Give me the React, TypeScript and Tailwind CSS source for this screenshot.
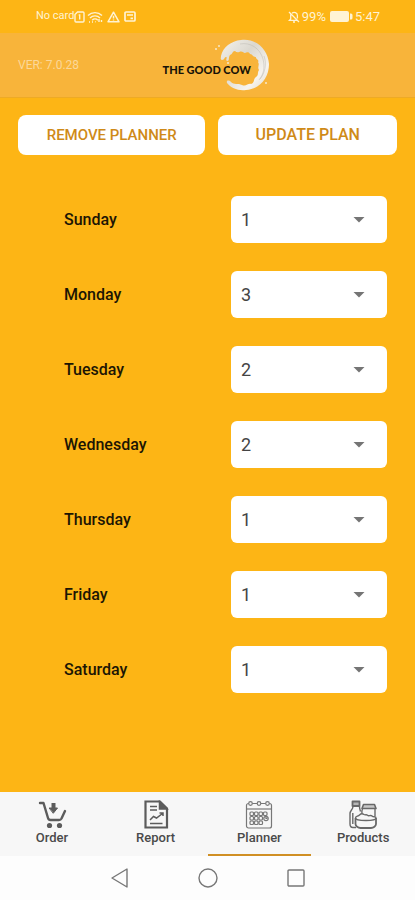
import { useState } from "react";
import type { ReactNode } from "react";

const days = [
  { name: "Sunday", amount: "1" },
  { name: "Monday", amount: "3" },
  { name: "Tuesday", amount: "2" },
  { name: "Wednesday", amount: "2" },
  { name: "Thursday", amount: "1" },
  { name: "Friday", amount: "1" },
  { name: "Saturday", amount: "1" },
];

const StatusBar = () => {
  return (
    <div className="flex h-[33px] items-center justify-between pr-[35px] pl-9 text-[#fff3d3]">
      <div className="flex items-center">
        <span className="text-[11px]">No card</span>
        <svg width="11" height="12" viewBox="0 0 11 12" fill="none" stroke="currentColor" strokeWidth="1.4" aria-hidden="true">
          <path d="M3.5 1H9a1 1 0 0 1 1 1v8a1 1 0 0 1-1 1H2a1 1 0 0 1-1-1V3.5z" />
          <path d="M4.7 4h1v4.5" />
        </svg>
        <svg className="ml-0.5" width="16" height="12" viewBox="0 0 16 12" fill="none" stroke="currentColor" strokeWidth="1.4" aria-hidden="true">
          <path d="M1 4.5a10 10 0 0 1 14 0M3 7a7 7 0 0 1 10 0M5.2 9.2a4 4 0 0 1 5.6 0" />
          <path d="M2 11h1M5 11h1M8 10.8h.6M12 8v3M14.5 9v2" />
        </svg>
        <svg className="ml-1" width="13" height="12" viewBox="0 0 13 12" fill="none" stroke="currentColor" strokeWidth="1.5" strokeLinejoin="round" aria-hidden="true">
          <path d="M6.5 1.2 12 10.8H1zM6.5 4.8v2.7M6.5 8.5v1" />
        </svg>
        <svg className="ml-1" width="12" height="11" viewBox="0 0 12 11" fill="none" stroke="currentColor" strokeWidth="1.7" aria-hidden="true">
          <rect x="1" y="1" width="10" height="9" rx="1" />
          <path d="M3 4h6M6.5 7.3H9" />
        </svg>
      </div>
      <div className="flex items-center text-[13px]">
        <svg width="12" height="12" viewBox="0 0 12 12" fill="none" stroke="currentColor" strokeWidth="1.3" aria-hidden="true">
          <path d="M1 1l10 10M2.7 3.5V8L1.4 9.4h7.8M4 2.2c2-1.6 5.4-.6 5.4 2.3v3M5 11h2" />
        </svg>
        <span className="ml-0.5">99%</span>
        <svg className="ml-1" width="23" height="11" viewBox="0 0 23 11" fill="currentColor" aria-hidden="true">
          <rect width="19" height="11" rx="2" />
          <path d="M20 2.5h1A1.5 1.5 0 0 1 22.5 4v3A1.5 1.5 0 0 1 21 8.5h-1z" />
        </svg>
        <span className="ml-0.5">5:47</span>
      </div>
    </div>
  );
};

const Logo = () => {
  return (
    <div className="relative flex h-[52px] w-[108px] items-center">
      <svg className="absolute top-0 right-0" width="58" height="52" viewBox="0 0 58 52" aria-hidden="true">
        <defs>
          <linearGradient id="milk" x1="0" y1="0" x2="1" y2="1">
            <stop offset="0" stopColor="#f6f3ec" />
            <stop offset="0.4" stopColor="#dbd8d0" />
            <stop offset="0.75" stopColor="#f7f4ee" />
            <stop offset="1" stopColor="#e2d9c6" />
          </linearGradient>
        </defs>
        <path
          fill="url(#milk)"
          d="M8 17C10 8 18 2 28 1C43-1 55 10 56 25C56 39 47 50 33 51C25 52 18 49 14 44C13 41 16 41 18 43C21 46 25 44 29 46C33 48 35 44 38 45C42 44 40 40 43 38C46 36 44 34 46 31C44 28 47 26 45 23C47 21 42 20 43 18C39 18 40 15 37 15C34 11 33 16 30 13C27 11 25 15 22 12C19 12 20 15 17 16C15 19 17 22 14 22C12 21 15 18 13 18C11 18 12 21 9 21C7 20 8 19 8 17Z"
        />
        <path fill="none" stroke="#bdbab3" strokeWidth="1" opacity=".5" d="M27 5c10-2 20 4 23 15 2 8 1 15-4 21M51 17c3 8 1 17-4 23" />
        <g fill="#f6e8cd">
          <circle cx="3" cy="10" r="1" />
          <circle cx="6" cy="7" r="1" />
          <circle cx="15" cy="24" r="1" />
          <circle cx="53" cy="44" r="1" />
        </g>
      </svg>
      <span className="relative mt-2.5 font-['Lato'] text-[11px] font-black whitespace-nowrap text-[#171308]">
        THE GOOD COW
      </span>
    </div>
  );
};

const DayRow = ({ name, amount }: { name: string; amount: string }) => {
  const [value, setValue] = useState(amount);

  return (
    <div className="flex items-center justify-between">
      <label htmlFor={name} className="text-base font-medium text-[#1c1504]">
        {name}
      </label>
      <div className="relative w-[156px]">
        <select
          id={name}
          value={value}
          onChange={(e) => setValue(e.target.value)}
          className="h-[47px] w-full appearance-none rounded-md bg-white px-2.5 text-lg text-[#444444]"
        >
          {["0", "1", "2", "3", "4", "5"].map((n) => (
            <option key={n} value={n}>
              {n}
            </option>
          ))}
        </select>
        <svg className="pointer-events-none absolute top-5 right-[22px]" width="12" height="7" viewBox="0 0 12 7" fill="#757575" aria-hidden="true">
          <path d="M.5 1h11L6 6.500z" />
        </svg>
      </div>
    </div>
  );
};

const CartIcon = () => (
  <svg width="30" height="30" viewBox="0 0 30 30" fill="none" stroke="#5c5c5c" strokeWidth="2.4" strokeLinecap="round" strokeLinejoin="round" aria-hidden="true">
    <path d="M3 3h3.500l4.500 15c.4 1.500 1 2 2.500 2H22c1.500 0 2-.5 2.500-1.500L28 11" />
    <path d="M16.500 3v6" strokeWidth="4" strokeLinecap="butt" />
    <path d="M12.500 8h8l-4 5z" fill="#5c5c5c" strokeWidth="1" />
    <circle cx="12.500" cy="25.500" r="2.600" fill="#5c5c5c" stroke="none" />
    <circle cx="22.500" cy="25.500" r="2.600" fill="#5c5c5c" stroke="none" />
  </svg>
);

const ReportIcon = () => (
  <svg width="30" height="30" viewBox="0 0 30 30" fill="none" stroke="#5c5c5c" strokeWidth="1.500" aria-hidden="true">
    <path d="M4.500 1.500H19l7 7v19H4.500z" strokeWidth="2.200" />
    <path d="M18.500 1.500V9H26z" fill="#5c5c5c" />
    <path d="M9 6.500h7M9 10h7M9 23.500h12.500" />
    <path d="m9 20 3.500-3.500 3 1.500 6-4.500M18.500 13H22v3" />
  </svg>
);

const CalendarIcon = () => (
  <svg width="30" height="30" viewBox="0 0 30 30" fill="none" stroke="#777777" strokeWidth="1.200" aria-hidden="true">
    <rect x="2.500" y="3.500" width="25" height="24.500" rx="2" />
    <path d="M2.500 9h25" />
    <g fill="#f7f7f7">
      <circle cx="6.500" cy="3.500" r="1.800" />
      <circle cx="15" cy="3.500" r="1.800" />
      <circle cx="23.500" cy="3.500" r="1.800" />
    </g>
    {[12, 16.5, 21].map((y) =>
      [6, 10.5, 15].map((x) => (
        <rect key={`${x}-${y}`} x={x} y={y} width="3.500" height="3.500" rx="1" />
      ))
    )}
    <rect x="19.500" y="12" width="3.500" height="3.500" rx="1" />
    <circle cx="22" cy="18.500" r="2.200" />
    <path d="M22 17v1.500h1.500" />
  </svg>
);

const GroceriesIcon = () => (
  <svg width="30" height="30" viewBox="0 0 30 30" fill="none" stroke="#686868" strokeWidth="1.400" strokeLinejoin="round" aria-hidden="true">
    <path d="M4.500 1.500h7V6h-7z" fill="#b5b5b5" strokeWidth="1.800" />
    <path d="M5 6.500c0 3-3 4-3 7V24c0 2 1 3.500 3 3.500h3M11.500 6.500c0 2 .5 3 1 5M4.800 13v11" />
    <path d="M15.500 4.500h11l1.500 4H14z" fill="#c8c8c8" strokeWidth="1.600" />
    <path d="M14.500 9c-1 2-1 3-.5 4.500M27 9v7" />
    <path d="M7.500 18c0-2 2.500-1.500 4-3s3-1.500 4.500-.5 2-.5 3.500.8 3-.8 4.500.7 4 0 4 2-4 2.500-10 2.500S7.500 20 7.500 18z" fill="#f7f7f7" />
    <path d="M7.500 18v6c0 2 2.500 4 5 4H23c2.500 0 5-2 5-4v-6" strokeWidth="1.800" />
  </svg>
);

const Tab = ({ label, icon, active }: { label: string; icon: ReactNode; active?: boolean }) => {
  return (
    <a
      href="#"
      aria-current={active ? "page" : undefined}
      className={
        active
          ? "flex h-16 flex-1 flex-col items-center border-b-2 border-[#d08f24] pt-2"
          : "flex h-16 flex-1 flex-col items-center border-b-2 border-transparent pt-2"
      }
    >
      {icon}
      <span className="text-[13px] leading-4 font-medium text-[#4a4a4a]">{label}</span>
    </a>
  );
};

export default function App() {
  return (
    <div className="flex min-h-screen flex-col bg-[#fdb515] font-['Roboto',sans-serif]">
      <StatusBar />
      <header className="flex h-[65px] items-center border-b border-[#eeaa25] bg-[#f8b43a] pl-[18px]">
        <span className="flex-1 text-xs text-[#fbd899]">VER: 7.0.28</span>
        <Logo />
        <div className="flex-1" />
      </header>

      <main className="flex-1 pt-[17px]">
        <div className="grid grid-cols-[188fr_179fr] gap-[13px] px-[18px] font-medium text-[#cf8a18]">
          <button type="button" className="h-10 rounded-lg bg-white text-[15px]">
            REMOVE PLANNER
          </button>
          <button type="button" className="h-10 rounded-lg bg-white text-base">
            UPDATE PLAN
          </button>
        </div>
        <div className="mt-[41px] flex flex-col gap-7 pr-7 pl-16">
          {days.map((day) => (
            <DayRow key={day.name} name={day.name} amount={day.amount} />
          ))}
        </div>
      </main>

      <nav className="flex bg-[#f7f7f7]">
        <Tab label="Order" icon={<CartIcon />} />
        <Tab label="Report" icon={<ReportIcon />} />
        <Tab label="Planner" icon={<CalendarIcon />} active />
        <Tab label="Products" icon={<GroceriesIcon />} />
      </nav>

      <div className="flex h-11 items-center justify-center gap-[68px] bg-[#fdfdfd]">
        <button type="button" aria-label="Back">
          <svg width="20" height="20" viewBox="0 0 20 20" fill="none" stroke="#777777" strokeWidth="1.4" strokeLinejoin="round">
            <path d="M17 1v18L2 10z" />
          </svg>
        </button>
        <button type="button" aria-label="Home">
          <svg width="20" height="20" viewBox="0 0 20 20" fill="none" stroke="#777777" strokeWidth="1.4">
            <circle cx="10" cy="10" r="9" />
          </svg>
        </button>
        <button type="button" aria-label="Recent apps">
          <svg width="20" height="20" viewBox="0 0 20 20" fill="none" stroke="#777777" strokeWidth="1.4">
            <rect x="2" y="2" width="16" height="16" rx="1" />
          </svg>
        </button>
      </div>
    </div>
  );
}
